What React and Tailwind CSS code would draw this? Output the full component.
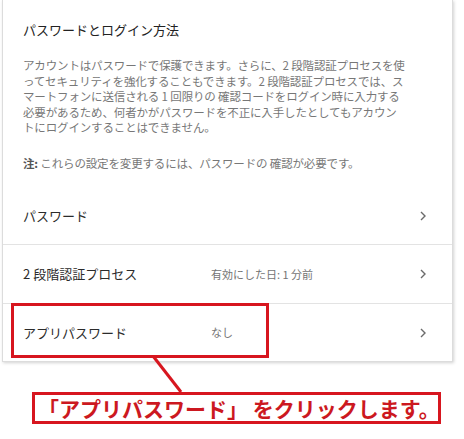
const descLines = [
  'アカウントはパスワードで保護できます。さらに、2 段階認証プロセスを使',
  'ってセキュリティを強化することもできます。2 段階認証プロセスでは、ス',
  'マートフォンに送信される 1 回限りの 確認コードをログイン時に入力する',
  '必要があるため、何者かがパスワードを不正に入手したとしてもアカウン',
  'トにログインすることはできません。',
];

function Chevron() {
  return (
    <svg width="8" height="12" viewBox="0 0 8 12" className="text-[#6b6b6b]">
      <polyline points="2,2 6,6 2,10" fill="none" stroke="currentColor" strokeWidth="1.4" />
    </svg>
  );
}

function Row({ label, value, height, last }) {
  return (
    <div className={`flex items-center pl-[20px] pr-[25px] ${height} ${last ? '' : 'border-b border-[#e3e3e3]'}`}>
      <div className="w-[188px] text-[13px] text-[#2b2b2b] whitespace-nowrap">{label}</div>
      <div className="flex-1 text-[11px] text-[#757575] whitespace-nowrap">{value}</div>
      <Chevron />
    </div>
  );
}

export default function App() {
  return (
    <div
      className="relative w-[464px] h-[439px] overflow-hidden bg-white"
      style={{ fontFamily: '"Noto Sans CJK JP", "Noto Sans", sans-serif' }}
    >
      <div className="ml-[2px] w-[451px] bg-white border border-t-0 border-[#dcdcdc] shadow-[1px_1px_3px_rgba(0,0,0,0.18)]">
        <div className="pt-[20px] px-[20px]">
          <h2 className="text-[13px] leading-[20px] text-[#222]">パスワードとログイン方法</h2>
          <p className="mt-[18px] text-[11.5px] leading-[15.5px] text-[#777] tracking-[-0.15px]">
            {descLines.map((l) => (
              <span key={l} className="block whitespace-nowrap">{l}</span>
            ))}
          </p>
          <p className="mt-[20px] text-[11.5px] leading-[15.5px] text-[#777] whitespace-nowrap tracking-[-0.15px]">
            <span className="font-bold text-[#555]">注:</span> これらの設定を変更するには、パスワードの 確認が必要です。
          </p>
        </div>
        <div className="mt-[16px]">
          <Row label="パスワード" value="" height="h-[58px]" />
          <Row label="2 段階認証プロセス" value="有効にした日: 1 分前" height="h-[59px]" />
          <Row label="アプリパスワード" value="なし" height="h-[57px]" last />
        </div>
      </div>

      <div className="absolute left-[11px] top-[303px] w-[258px] h-[55px] border-[3px] border-[#d7161f]" />
      <svg className="absolute left-0 top-0 pointer-events-none" width="464" height="439">
        <line x1="153" y1="356" x2="181" y2="392" stroke="#d7161f" strokeWidth="3" />
      </svg>

      <div className="mt-[30px] ml-[32px] w-[409px] h-[32px] border-[3px] border-[#d7161f] bg-white flex items-center pl-[3px] relative">
        <span className="text-[21px] leading-none font-bold text-[#cc1820] whitespace-nowrap">「アプリパスワード」 をクリックします。</span>
      </div>
    </div>
  );
}
